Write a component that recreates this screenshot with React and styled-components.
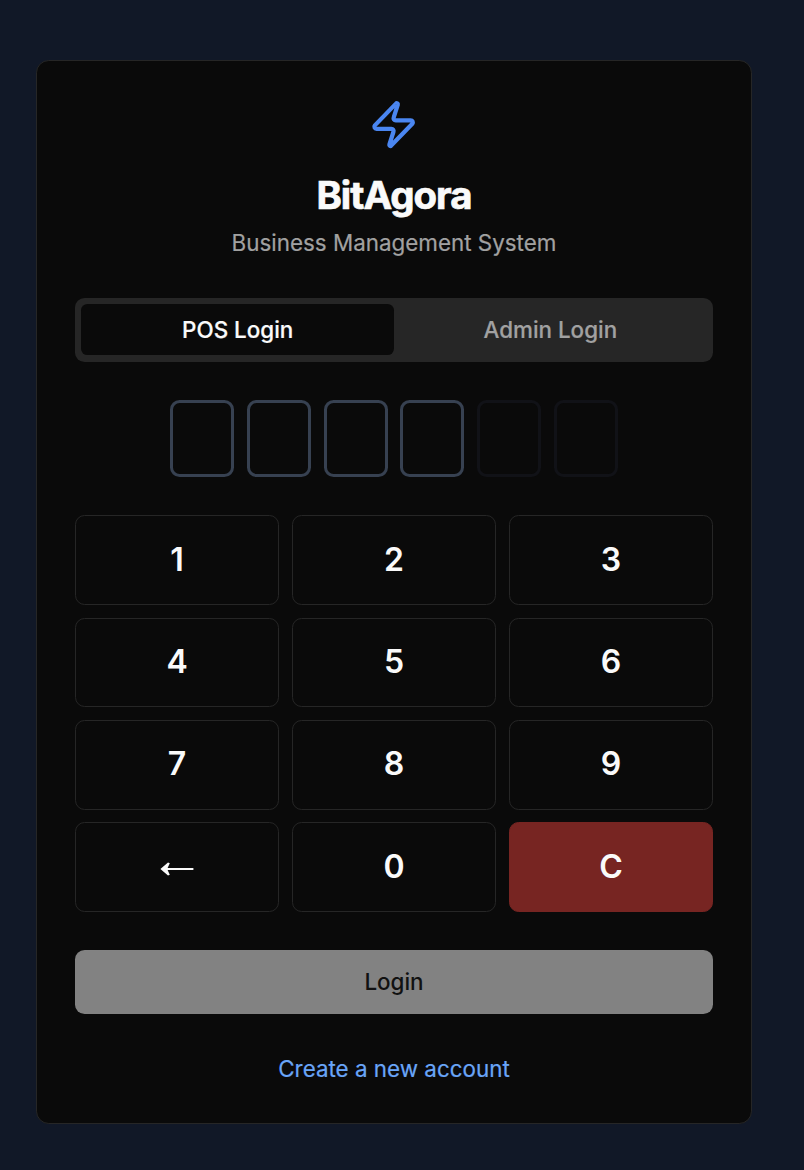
import React, { useState } from "react";
import styled, { createGlobalStyle, css } from "styled-components";
import { Zap } from "lucide-react";

const GlobalStyle = createGlobalStyle`
  *, *::before, *::after { box-sizing: border-box; }
  body {
    margin: 0;
    background: #111827;
    font-family: Inter, "Liberation Sans", sans-serif;
    -webkit-font-smoothing: antialiased;
    -webkit-text-stroke: 0.2px currentColor;
  }
  button { font: inherit; margin: 0; cursor: pointer; }
`;

const Page = styled.main`
  display: flex;
  align-items: flex-start;
  justify-content: center;
  min-height: 1170px;
  padding: 60px 16px 0 0;
  background: #111827;
`;

const Card = styled.section`
  width: 716.8px;
  height: 1063.6px;
  padding: 38.4px;
  border: 1px solid #262626;
  border-radius: 12.8px;
  background: #0a0a0a;
  color: #fafafa;
`;

const Header = styled.header`
  display: flex;
  flex-direction: column;
  align-items: center;
  height: 198.2px;
`;

const Logo = styled(Zap)`
  width: 51.2px;
  height: 51.2px;
  color: #4a86f1;
`;

const Title = styled.h1`
  margin: 19.2px 0 0;
  font-size: 38.4px;
  line-height: 51.2px;
  font-weight: 700;
  letter-spacing: -0.025em;
  -webkit-text-stroke-width: 0.7px;
`;

const Subtitle = styled.p`
  margin: 6.4px 0 0;
  font-size: 22.4px;
  line-height: 32px;
  color: #a1a1a1;
`;

const Tabs = styled.div`
  display: grid;
  grid-template-columns: 1fr 1fr;
  height: 64px;
  padding: 6.4px;
  border-radius: 9.6px;
  background: #262626;
`;

const Tab = styled.button`
  height: 51.2px;
  padding: 0;
  border: 0;
  border-radius: 6.4px;
  background: ${(p) => (p.$active ? "#0a0a0a" : "transparent")};
  color: ${(p) => (p.$active ? "#fafafa" : "#a1a1a1")};
  && { font-size: 22.4px; font-weight: 500; }
`;

const PinRow = styled.div`
  display: flex;
  justify-content: center;
  gap: 12.8px;
  margin: 38.4px 0;
`;

const PinBox = styled.div`
  width: 64px;
  height: 76.8px;
  border: 3px solid ${(p) => (p.$optional ? "#111217" : "#374151")};
  border-radius: 9.6px;
`;

const Keypad = styled.div`
  display: grid;
  grid-template-columns: repeat(3, 1fr);
  gap: 12.8px;
`;

const Key = styled.button`
  display: flex;
  align-items: center;
  justify-content: center;
  height: 89.6px;
  padding: 0 0 1.6px;
  border: 1px solid #262626;
  border-radius: 9.6px;
  background: #0a0a0a;
  color: #fafafa;
  -webkit-text-stroke-width: 0;
  && { font-size: 32px; font-weight: 600; line-height: 39px; }
  ${(p) =>
    p.$danger &&
    css`
      border-color: #772522;
      background: #772522;
    `}
`;

const Arrow = styled.svg`
  width: 34px;
  height: 14px;
  margin-top: 5.6px;
`;

const LoginButton = styled.button`
  display: block;
  width: 100%;
  height: 64px;
  margin-top: 38.4px;
  padding: 0 0 2px;
  border: 0;
  border-radius: 9.6px;
  background: #828282;
  color: #111111;
  -webkit-text-stroke-width: 0;
  && { font-size: 22.4px; font-weight: 500; }
`;

const Footer = styled.footer`
  display: flex;
  justify-content: center;
  margin-top: 38.4px;
`;

const Link = styled.a`
  font-size: 22.4px;
  line-height: 32px;
  color: #69a5f8;
  text-decoration: none;
`;

const KEYS = ["1", "2", "3", "4", "5", "6", "7", "8", "9", "←", "0", "C"];

function Backspace() {
  return (
    <Arrow viewBox="0 0 34 14" fill="currentColor" aria-label="Backspace">
      <path d="M.4 7 L8 .4 L9.8 1.2 L7.6 5.9 H33.4 V8.1 H7.6 L9.8 12.8 L8 13.6 Z" />
    </Arrow>
  );
}

export default function App() {
  const [tab, setTab] = useState("pos");
  return (
    <Page>
      <GlobalStyle />
      <Card>
        <Header>
          <Logo strokeWidth={2} />
          <Title>BitAgora</Title>
          <Subtitle>Business Management System</Subtitle>
        </Header>
        <Tabs>
          <Tab $active={tab === "pos"} onClick={() => setTab("pos")}>POS Login</Tab>
          <Tab $active={tab === "admin"} onClick={() => setTab("admin")}>Admin Login</Tab>
        </Tabs>
        <PinRow>
          {[0, 1, 2, 3, 4, 5].map((i) => (
            <PinBox key={i} $optional={i > 3} />
          ))}
        </PinRow>
        <Keypad>
          {KEYS.map((k) => (
            <Key key={k} $danger={k === "C"}>
              {k === "←" ? <Backspace /> : k}
            </Key>
          ))}
        </Keypad>
        <LoginButton>Login</LoginButton>
        <Footer>
          <Link>Create a new account</Link>
        </Footer>
      </Card>
    </Page>
  );
}
